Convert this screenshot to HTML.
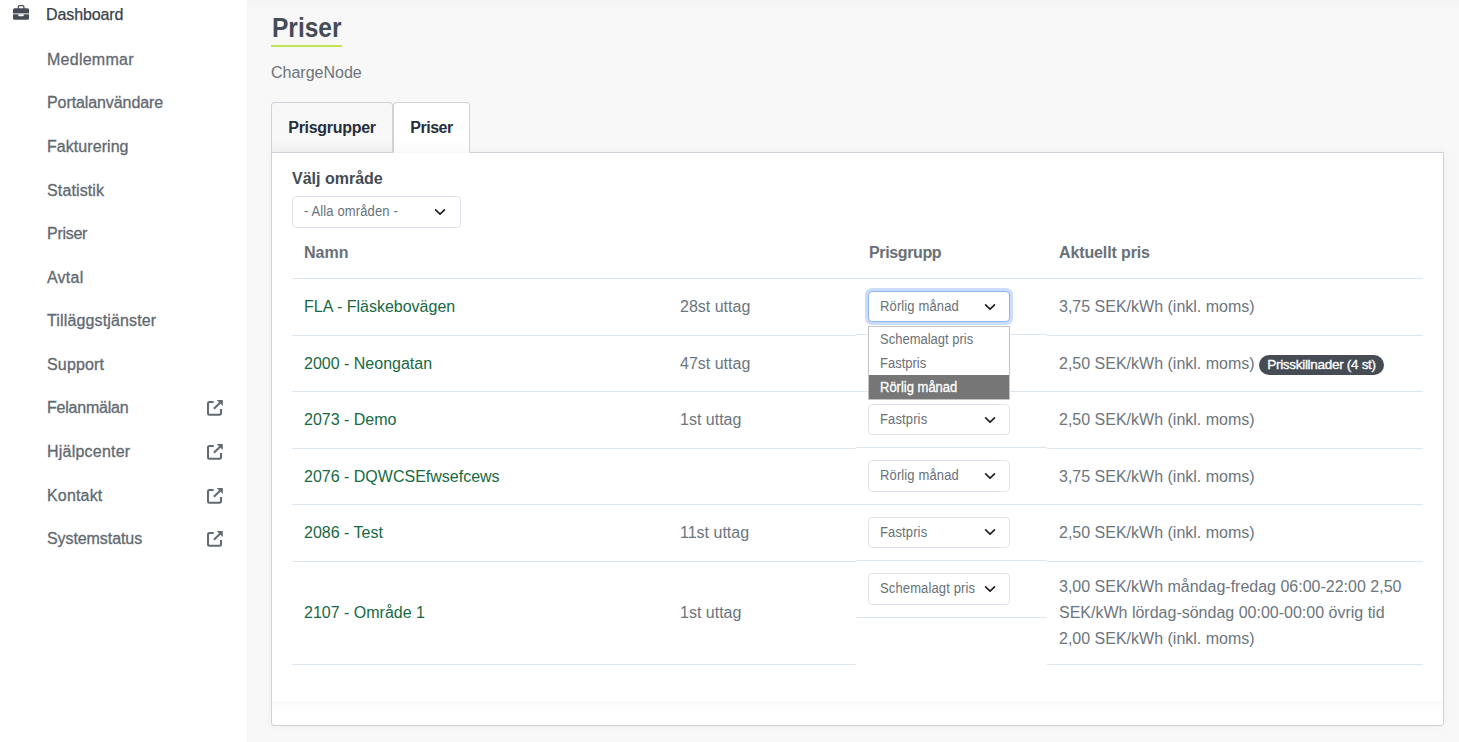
<!DOCTYPE html>
<html lang="sv">
<head>
<meta charset="utf-8">
<title>Priser</title>
<style>
*{box-sizing:border-box;margin:0;padding:0}
html,body{width:1459px;height:742px;overflow:hidden}
body{font-family:"Liberation Sans",Arial,sans-serif;background:#f8f8f8;color:#5f666d;position:relative;font-size:16px}
.abs{position:absolute;white-space:nowrap}
#side{position:absolute;left:0;top:0;width:247px;height:742px;background:#fff}
.nav{position:absolute;left:47px;font-size:16px;line-height:20px;color:#626971;white-space:nowrap;-webkit-text-stroke:0.300px #626971}
.ext{position:absolute;left:206px;width:18px;height:18px}
#main{position:absolute;left:247px;top:0;width:1212px;height:742px;background:#f8f8f8}
#topshade{position:absolute;left:247px;top:0;width:1212px;height:9px;background:linear-gradient(#f3f3f3,#f8f8f8)}
h1{position:absolute;left:271.700px;top:12px;font-size:27px;line-height:32px;font-weight:bold;color:#454c55;white-space:nowrap;transform:scaleX(0.908);transform-origin:0 0}
#h1line{position:absolute;left:271px;top:45px;width:71px;height:2px;background:#c5e350}
#sub{left:271px;top:63px;font-size:16px;line-height:20px;color:#6c757d}
.tab{position:absolute;top:102px;height:51px;border:1px solid #cdd3d9;border-bottom:none;border-radius:4px 4px 0 0;font-weight:bold;font-size:16px;line-height:20px;color:#262f3c;letter-spacing:-0.300px;padding-top:15px;text-align:center;white-space:nowrap}
#tab1{left:271px;width:122px;background:linear-gradient(#f8f8f8 70%,#f2f2f2)}
#tab2{left:393px;width:77px;letter-spacing:-0.450px;background:linear-gradient(#fff 75%,#f9f9f9);z-index:3}
#tab2:after{content:"";position:absolute;left:0;right:0;bottom:-1px;height:1px;background:#fff}
#panel{position:absolute;left:271px;top:152px;width:1173px;height:574px;background:#fff;border:1px solid #cdd3d9;border-radius:0 0 3px 3px;box-shadow:0 0 10px rgba(0,0,0,0.045)}
#panelshade{position:absolute;left:272px;top:701px;width:1171px;height:12px;background:linear-gradient(#fafafa,#fff)}
.lbl{font-weight:bold;font-size:16px;line-height:20px;color:#434b54}
.th{font-weight:bold;font-size:16px;line-height:20px;color:#697077}
.sel{position:absolute;height:31px;border:1px solid #dee4ec;border-radius:4px;background:#fff;font-size:13px;line-height:29px;color:#6a7178;padding-left:11px;white-space:nowrap;letter-spacing:0.130px}
.t{display:inline-block;transform:scaleY(1.100);transform-origin:0 19px}
#dd .t{transform-origin:0 17.500px}
.sel svg{position:absolute;right:13px;top:10px;width:12px;height:10px}
.hl{position:absolute;height:1px;background:#dee6ee}
.nm{font-size:16px;line-height:20px;color:#17693f;left:304px}
.ct{font-size:16px;line-height:20px;color:#6c757d;left:680px}
.pr{font-size:16px;line-height:20px;color:#6c757d;left:1059px}
#badge{position:absolute;left:1259px;top:355px;width:125px;height:20px;border-radius:10px;background:#454c54;color:#fff;font-size:13.500px;line-height:20px;text-align:center;font-weight:normal;-webkit-text-stroke:0.350px #fff;letter-spacing:-0.300px;white-space:nowrap}
#dd{position:absolute;left:868px;top:326px;width:142px;height:74px;background:#fff;border:1px solid #c4c4c4;font-size:13px;color:#6a7178;z-index:5}
#dd div{height:24px;line-height:26px;padding-left:11px;white-space:nowrap;overflow:hidden;letter-spacing:0}
#dd div.on{background:#767676;color:#fff;-webkit-text-stroke:0.300px #fff}
</style>
</head>
<body>
<div id="side">
  <svg style="position:absolute;left:13px;top:5px;width:16px;height:15px" viewBox="0 0 16 15"><rect x="5.300" y="0.600" width="5.600" height="4" rx="1.100" fill="none" stroke="#454c54" stroke-width="1.200"/><rect x="0" y="3.300" width="16" height="11.400" rx="1.500" fill="#454c54"/><rect x="0" y="8.400" width="16" height="0.900" fill="#fff"/><path d="M5.300 9.300h5.400v1.200a0.800 0.800 0 0 1-0.800 0.800H6.100a0.800 0.800 0 0 1-0.800-0.800z" fill="#fff"/></svg>
  <div class="nav" style="left:46px;top:5px;letter-spacing:-0.100px;color:#39414a;-webkit-text-stroke:0.25px #39414a">Dashboard</div>
  <div class="nav" style="top:50px;letter-spacing:0.250px">Medlemmar</div>
  <div class="nav" style="top:93px;letter-spacing:-0.090px">Portalanvändare</div>
  <div class="nav" style="top:137px;letter-spacing:0.060px">Fakturering</div>
  <div class="nav" style="top:181px;letter-spacing:0.130px">Statistik</div>
  <div class="nav" style="top:224px;letter-spacing:-0.270px">Priser</div>
  <div class="nav" style="top:268px;letter-spacing:0.230px">Avtal</div>
  <div class="nav" style="top:311px;letter-spacing:0.140px">Tilläggstjänster</div>
  <div class="nav" style="top:355px;letter-spacing:0.160px">Support</div>
  <div class="nav" style="top:398px;letter-spacing:-0.220px">Felanmälan</div>
  <div class="nav" style="top:442px;letter-spacing:0.220px">Hjälpcenter</div>
  <div class="nav" style="top:486px;letter-spacing:0.170px">Kontakt</div>
  <div class="nav" style="top:529px;letter-spacing:-0.080px">Systemstatus</div>
  <svg class="ext" style="top:399px" viewBox="0 0 18 18"><path d="M7.700 2.900H3.500a1.500 1.500 0 0 0-1.500 1.500v9.850a1.500 1.500 0 0 0 1.500 1.500h10a1.500 1.500 0 0 0 1.500-1.500V10.100" fill="none" stroke="#626a72" stroke-width="2.050"/><path d="M7.900 9.800 14.800 3" fill="none" stroke="#626a72" stroke-width="2"/><path d="M10.700 1h6.100v6.100z" fill="#626a72"/></svg>
  <svg class="ext" style="top:443px" viewBox="0 0 18 18"><path d="M7.700 2.900H3.500a1.500 1.500 0 0 0-1.500 1.500v9.850a1.500 1.500 0 0 0 1.500 1.500h10a1.500 1.500 0 0 0 1.500-1.500V10.100" fill="none" stroke="#626a72" stroke-width="2.050"/><path d="M7.900 9.800 14.800 3" fill="none" stroke="#626a72" stroke-width="2"/><path d="M10.700 1h6.100v6.100z" fill="#626a72"/></svg>
  <svg class="ext" style="top:487px" viewBox="0 0 18 18"><path d="M7.700 2.900H3.500a1.500 1.500 0 0 0-1.500 1.500v9.850a1.500 1.500 0 0 0 1.500 1.500h10a1.500 1.500 0 0 0 1.500-1.500V10.100" fill="none" stroke="#626a72" stroke-width="2.050"/><path d="M7.900 9.800 14.800 3" fill="none" stroke="#626a72" stroke-width="2"/><path d="M10.700 1h6.100v6.100z" fill="#626a72"/></svg>
  <svg class="ext" style="top:530px" viewBox="0 0 18 18"><path d="M7.700 2.900H3.500a1.500 1.500 0 0 0-1.500 1.500v9.850a1.500 1.500 0 0 0 1.500 1.500h10a1.500 1.500 0 0 0 1.500-1.500V10.100" fill="none" stroke="#626a72" stroke-width="2.050"/><path d="M7.900 9.800 14.800 3" fill="none" stroke="#626a72" stroke-width="2"/><path d="M10.700 1h6.100v6.100z" fill="#626a72"/></svg>
</div>
<div id="main"></div>
<div id="topshade"></div>
<h1>Priser</h1>
<div id="h1line"></div>
<div id="sub" class="abs">ChargeNode</div>
<div id="tab1" class="tab">Prisgrupper</div>
<div id="panel"></div>
<div id="panelshade"></div>
<div id="tab2" class="tab">Priser</div>

<div class="abs lbl" style="left:292px;top:169px">Välj område</div>
<div class="sel" style="left:292px;top:196px;width:169px;height:32px;line-height:30px"><span class="t">- Alla områden -</span><svg style="right:14px" viewBox="0 0 12 10"><path d="M1.600 2.900 6.050 7.100 10.500 2.900" fill="none" stroke="#1c1c1c" stroke-width="1.600" stroke-linecap="round" stroke-linejoin="round"/></svg></div>

<div class="abs th" style="left:304px;top:243px">Namn</div>
<div class="abs th" style="left:869px;top:243px;letter-spacing:-0.370px">Prisgrupp</div>
<div class="abs th" style="left:1059px;top:243px;letter-spacing:-0.120px">Aktuellt pris</div>

<!-- row lines -->
<div class="hl" style="left:292px;top:278px;width:1131px"></div>
<div class="hl" style="left:292px;top:335px;width:564px"></div><div class="hl" style="left:856px;top:334px;width:191px"></div><div class="hl" style="left:1047px;top:335px;width:376px"></div>
<div class="hl" style="left:292px;top:391px;width:564px"></div><div class="hl" style="left:856px;top:391px;width:191px"></div><div class="hl" style="left:1047px;top:391px;width:376px"></div>
<div class="hl" style="left:292px;top:448px;width:564px"></div><div class="hl" style="left:856px;top:447px;width:191px"></div><div class="hl" style="left:1047px;top:448px;width:376px"></div>
<div class="hl" style="left:292px;top:504px;width:564px"></div><div class="hl" style="left:856px;top:504px;width:191px"></div><div class="hl" style="left:1047px;top:504px;width:376px"></div>
<div class="hl" style="left:292px;top:561px;width:564px"></div><div class="hl" style="left:856px;top:560px;width:191px"></div><div class="hl" style="left:1047px;top:561px;width:376px"></div>
<div class="hl" style="left:292px;top:664px;width:564px"></div><div class="hl" style="left:856px;top:617px;width:191px"></div><div class="hl" style="left:1047px;top:664px;width:376px"></div>

<!-- rows -->
<div class="abs nm" style="top:297px">FLA - Fläskebovägen</div><div class="abs ct" style="top:297px">28st uttag</div><div class="abs pr" style="top:297px">3,75 SEK/kWh (inkl. moms)</div>
<div class="abs nm" style="top:354px">2000 - Neongatan</div><div class="abs ct" style="top:354px">47st uttag</div><div class="abs pr" style="top:354px">2,50 SEK/kWh (inkl. moms)</div>
<div class="abs nm" style="top:410px">2073 - Demo</div><div class="abs ct" style="top:410px">1st uttag</div><div class="abs pr" style="top:410px">2,50 SEK/kWh (inkl. moms)</div>
<div class="abs nm" style="top:467px">2076 - DQWCSEfwsefcews</div><div class="abs pr" style="top:467px">3,75 SEK/kWh (inkl. moms)</div>
<div class="abs nm" style="top:523px">2086 - Test</div><div class="abs ct" style="top:523px">11st uttag</div><div class="abs pr" style="top:523px">2,50 SEK/kWh (inkl. moms)</div>
<div class="abs nm" style="top:603px">2107 - Område 1</div><div class="abs ct" style="top:603px">1st uttag</div>
<div class="abs pr" style="top:574px;line-height:26px">3,00 SEK/kWh måndag-fredag 06:00-22:00 2,50<br>SEK/kWh lördag-söndag 00:00-00:00 övrig tid<br>2,00 SEK/kWh (inkl. moms)</div>
<div id="badge">Prisskillnader (4 st)</div>

<!-- selects -->
<div class="sel" style="left:868px;top:291px;width:142px;border-color:#8db3f2;box-shadow:0 0 0 3px #cbdcf9"><span class="t">Rörlig månad</span><svg viewBox="0 0 12 10"><path d="M1.600 2.900 6.050 7.100 10.500 2.900" fill="none" stroke="#1c1c1c" stroke-width="1.600" stroke-linecap="round" stroke-linejoin="round"/></svg></div>
<div class="sel" style="left:868px;top:404px;width:142px"><span class="t">Fastpris</span><svg viewBox="0 0 12 10"><path d="M1.600 2.900 6.050 7.100 10.500 2.900" fill="none" stroke="#1c1c1c" stroke-width="1.600" stroke-linecap="round" stroke-linejoin="round"/></svg></div>
<div class="sel" style="left:868px;top:460px;width:142px;height:32px;line-height:30px"><span class="t">Rörlig månad</span><svg viewBox="0 0 12 10"><path d="M1.600 2.900 6.050 7.100 10.500 2.900" fill="none" stroke="#1c1c1c" stroke-width="1.600" stroke-linecap="round" stroke-linejoin="round"/></svg></div>
<div class="sel" style="left:868px;top:517px;width:142px"><span class="t">Fastpris</span><svg style="top:9px" viewBox="0 0 12 10"><path d="M1.600 2.900 6.050 7.100 10.500 2.900" fill="none" stroke="#1c1c1c" stroke-width="1.600" stroke-linecap="round" stroke-linejoin="round"/></svg></div>
<div class="sel" style="left:868px;top:573px;width:142px;height:32px;line-height:30px"><span class="t">Schemalagt pris</span><svg viewBox="0 0 12 10"><path d="M1.600 2.900 6.050 7.100 10.500 2.900" fill="none" stroke="#1c1c1c" stroke-width="1.600" stroke-linecap="round" stroke-linejoin="round"/></svg></div>

<div id="dd"><div><span class="t">Schemalagt pris</span></div><div><span class="t">Fastpris</span></div><div class="on"><span class="t">Rörlig månad</span></div></div>
</body>
</html>
